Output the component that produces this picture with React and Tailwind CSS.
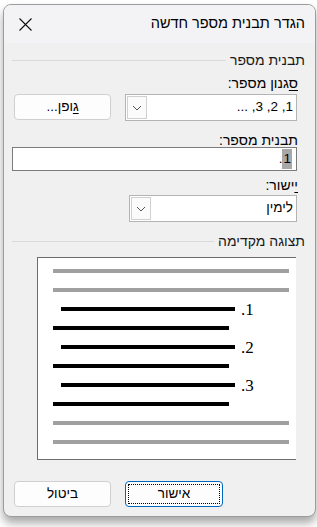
import React from "react";

const font = { fontFamily: '"Liberation Sans", "DejaVu Sans", sans-serif' };

function Chevron() {
  return (
    <svg width="10" height="6" viewBox="0 0 10 6" fill="none">
      <path d="M1 1 L5 5 L9 1" stroke="#555" strokeWidth="1" />
    </svg>
  );
}

function Combo({ value, width }) {
  return (
    <div className={`flex h-full items-stretch border border-[#b4b4b4] bg-white ${width}`}>
      <div className="flex-1 flex items-center pr-[3px] text-[13.5px] text-black">{value}</div>
      <div className="w-[20px] flex items-center justify-center border border-[#d0d0d0] bg-[#fbfbfb] m-[1px]">
        <Chevron />
      </div>
    </div>
  );
}

function Heading({ text }) {
  return (
    <div className="flex items-center h-[16px] pr-[10px] pl-[8px] gap-[4px]">
      <span className="text-[14px] text-[#1a1a1a] whitespace-nowrap">{text}</span>
      <div className="flex-1 h-px bg-[#dadada]" />
    </div>
  );
}

function Label({ children, h = "h-[16px]" }) {
  return <div className={`flex items-center ${h} pr-[17px] text-[14px] text-black`}>{children}</div>;
}

function PreviewRow({ n }) {
  return (
    <>
      <div className="flex items-center h-[4px] pl-[23px]">
        <div className="w-[174px] h-[4px] bg-black" />
        <span
          dir="rtl"
          className="ml-[6px] text-[17px] leading-none text-black"
          style={{ fontFamily: '"Liberation Serif", serif' }}
        >
          {n}.
        </span>
      </div>
      <div className="h-[4px] w-[176px] ml-[15px] bg-black" />
    </>
  );
}

export default function App() {
  return (
    <div className="w-[317px] h-[527px] bg-white overflow-hidden pt-[4px] pl-[3px]" style={font}>
      <div
        dir="rtl"
        className="w-[313px] h-[513px] rounded-[8px] border border-[#9c9c9c] bg-[#f0f0f0] overflow-hidden flex flex-col shadow-[0_6px_10px_rgba(0,0,0,0.35)]"
      >
        {/* title bar */}
        <div className="h-[38px] bg-[#f3f3f5] flex items-center justify-between pr-[10px] pl-[15px]">
          <span className="text-[14.5px] text-black">הגדר תבנית מספר חדשה</span>
          <svg width="13" height="13" viewBox="0 0 13 13">
            <path d="M0.5 0.5 L12.5 12.5 M12.5 0.5 L0.5 12.5" stroke="#111" strokeWidth="1.1" />
          </svg>
        </div>

        <div className="mt-[9px]">
          <Heading text="תבנית מספר" />
        </div>

        <div className="mt-[7px]">
          <Label>
            <span className="underline underline-offset-2">ס</span>גנון מספר:
          </Label>
        </div>

        <div className="mt-[3px] h-[27px] flex pr-[18px] gap-[14px]">
          <Combo value="1, 2, 3, ..." width="w-[172px]" />
          <div className="w-[97px] h-[26px] rounded-[4px] border border-[#d0d0d0] bg-[#fdfdfd] flex items-center justify-center text-[13.5px] text-black">
            <span>
              <span className="underline underline-offset-2">ג</span>ופן...
            </span>
          </div>
        </div>

        <div className="mt-[12px]">
          <Label h="h-[14px]">
            ת<span className="underline underline-offset-2">ב</span>נית מספר:
          </Label>
        </div>

        <div className="mr-[18px] w-[285px] h-[24px] border border-[#7c7c7c] bg-white flex items-center pr-[4px] text-[13.5px] text-black">
          <span className="bg-[#a8a8a8] px-[1px]">1</span>
          <span>.</span>
        </div>

        <div className="mt-[7px]">
          <Label h="h-[14px]">
            <span className="underline underline-offset-2">י</span>ישור:
          </Label>
        </div>

        <div className="mt-[3px] h-[27px] flex pr-[18px]">
          <Combo value="לימין" width="w-[168px]" />
        </div>

        <div className="mt-[11px]">
          <Heading text="תצוגה מקדימה" />
        </div>

        <div
          dir="ltr"
          className="mt-[8px] mr-[19px] w-[259px] h-[203px] bg-white border-l border-t border-b border-[#6e6e6e] flex flex-col gap-[15px] pt-[11px]"
        >
          <div className="h-[4px] w-[236px] ml-[15px] bg-[#a0a0a0]" />
          <div className="h-[4px] w-[236px] ml-[15px] bg-[#a0a0a0]" />
          <PreviewRow n={1} />
          <PreviewRow n={2} />
          <PreviewRow n={3} />
          <div className="h-[4px] w-[236px] ml-[15px] bg-[#a0a0a0]" />
          <div className="h-[4px] w-[236px] ml-[15px] bg-[#a0a0a0]" />
        </div>

        <div dir="ltr" className="mt-[21px] flex pl-[10px] gap-[14px]">
          <div className="w-[97px] h-[26px] rounded-[4px] border border-[#d0d0d0] bg-[#fdfdfd] flex items-center justify-center text-[13.5px] text-black">
            ביטול
          </div>
          <div className="w-[98px] h-[26px] rounded-[4px] border-[1.5px] border-[#0067c0] bg-[#fdfdfd] p-[2px]">
            <div className="w-full h-full border border-dotted border-black flex items-center justify-center text-[13.5px] text-black">
              אישור
            </div>
          </div>
        </div>
      </div>
    </div>
  );
}
